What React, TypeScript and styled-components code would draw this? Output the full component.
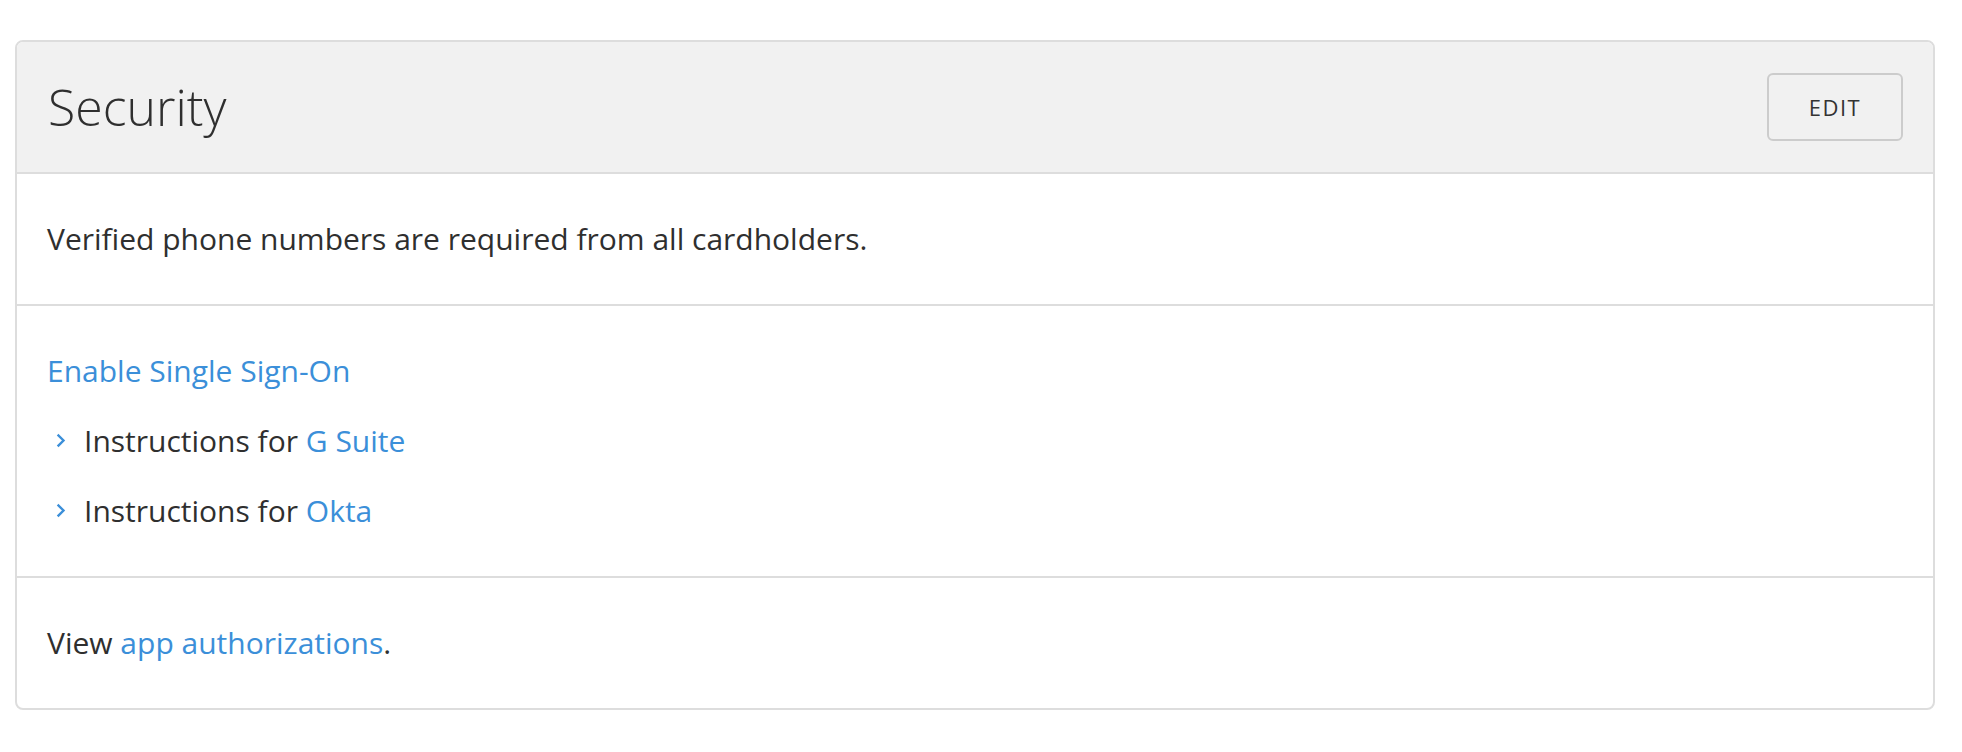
import React from "react";
import styled, { createGlobalStyle } from "styled-components";

const GlobalStyle = createGlobalStyle`
  html, body {
    margin: 0;
    padding: 0;
    background: #ffffff;
  }
  body {
    font-family: "Open Sans", "Noto Sans", "Liberation Sans", sans-serif;
    color: #2f2f2f;
  }
`;

const Page = styled.div`
  padding: 40px 27px 40px 15px;
`;

const Card = styled.section`
  border: 2px solid #dddddd;
  border-radius: 8px;
  overflow: hidden;
  background: #ffffff;
`;

const Header = styled.header`
  display: flex;
  align-items: center;
  justify-content: space-between;
  height: 132px;
  padding: 0 30px 0 31px;
  background: #f1f1f1;
  border-bottom: 2px solid #dddddd;
  box-sizing: border-box;
`;

const Title = styled.h2`
  margin: 0;
  font-size: 50px;
  font-weight: 300;
  line-height: 1;
  color: #2f2f2f;
`;

const EditButton = styled.button`
  width: 136px;
  height: 68px;
  border: 2px solid #cccccc;
  border-radius: 6px;
  background: #f1f1f1;
  font-family: inherit;
  font-size: 22px;
  letter-spacing: 1.5px;
  color: #333333;
  cursor: pointer;
`;

const Section = styled.div<{ $last?: boolean }>`
  padding: 42px 30px ${(p) => (p.$last ? "43px" : "43px")};
  border-bottom: ${(p) => (p.$last ? "none" : "2px solid #dddddd")};
`;

const Text = styled.p`
  margin: 0;
  font-size: 30px;
  line-height: 45px;
`;

const Link = styled.a`
  color: #3b8fd9;
  text-decoration: none;
  cursor: pointer;
`;

const List = styled.div`
  display: flex;
  flex-direction: column;
  gap: 25px;
`;

const Item = styled.div`
  display: flex;
  align-items: center;
  gap: 18px;
  padding-left: 9px;
  font-size: 30px;
  line-height: 45px;
`;

const Chevron = () => (
  <svg width="10" height="15" viewBox="0 0 10 15" aria-hidden="true">
    <path
      d="M2.5 2.5 L7.5 7.5 L2.5 12.5"
      fill="none"
      stroke="#3b8fd9"
      strokeWidth="2.4"
      strokeLinecap="square"
      strokeLinejoin="miter"
    />
  </svg>
);

export default function App() {
  return (
    <>
      <GlobalStyle />
      <Page>
        <Card>
          <Header>
            <Title>Security</Title>
            <EditButton>EDIT</EditButton>
          </Header>
          <Section>
            <Text>Verified phone numbers are required from all cardholders.</Text>
          </Section>
          <Section>
            <List>
              <Text>
                <Link>Enable Single Sign-On</Link>
              </Text>
              <Item>
                <Chevron />
                <span>
                  Instructions for <Link>G Suite</Link>
                </span>
              </Item>
              <Item>
                <Chevron />
                <span>
                  Instructions for <Link>Okta</Link>
                </span>
              </Item>
            </List>
          </Section>
          <Section $last>
            <Text>
              View <Link>app authorizations</Link>.
            </Text>
          </Section>
        </Card>
      </Page>
    </>
  );
}
